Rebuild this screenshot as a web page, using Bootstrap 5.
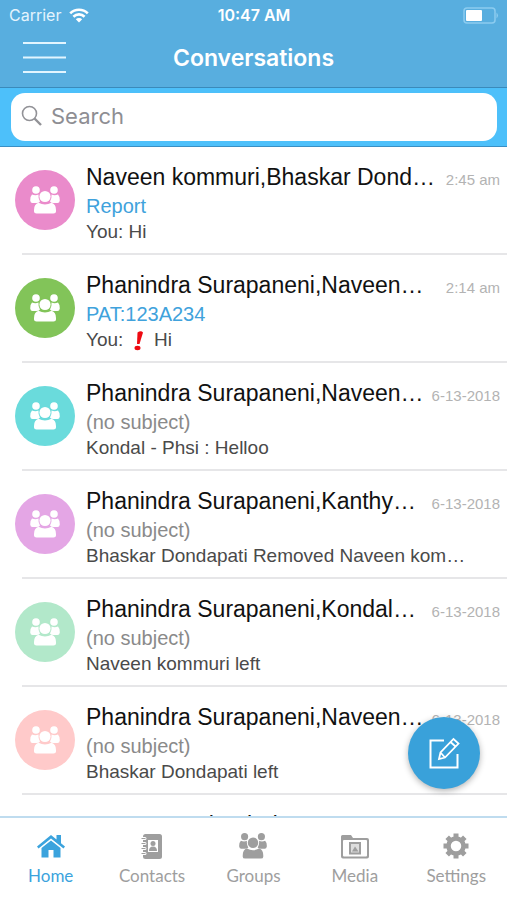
<!DOCTYPE html>
<html lang="en">
<head>
<meta charset="utf-8">
<meta name="viewport" content="width=device-width, initial-scale=1">
<title>Conversations</title>
<link href="https://cdn.jsdelivr.net/npm/bootstrap@5.3.0/dist/css/bootstrap.min.css" rel="stylesheet">
<style>
body{font-family:"Liberation Sans",Arial,sans-serif;color:#111}
.app-head{background:#58aedf;border-bottom:1px solid #3a8abb;font-family:Inter,sans-serif;color:#fff}
.status-bar{height:30px;font-size:16px;line-height:30px;padding:0 8px 0 9px}
.status-bar .carrier{color:#e4f4fd}
.status-bar .clock{font-weight:600}
.title-bar{height:57px}
.title-bar h1{font-size:23px;line-height:56px;font-weight:600}
.menu-btn{padding:11px 0 13px 22px;line-height:0}
.side{flex:1 1 0}
.search-band{background:#4dc0fa;border-bottom:1px solid #3a8fc4;padding:5px 10px 5px 11px}
.search-box{background:#fff;border-radius:14px;height:48px;padding:0 10px 2px}
.search-box input{font-family:Inter,sans-serif;font-size:22px;line-height:46px;outline:0;color:#555}
.search-box input::placeholder{color:#8e8e93;opacity:1}
.threads-pane{min-height:0}
.thread{color:inherit;padding:0 7px 0 15px;height:108px}
.thread-body{padding-top:16px}
.thread::after{content:"";position:absolute;left:22px;right:0;bottom:0;height:2px;background:#e6e6e8}
.avatar{width:60px;height:60px;margin:23px 11px 0 0}
.who{font-size:23px;line-height:28px}
.when{font-size:15px;line-height:28px;color:#b3b3b3}
.topic{font-size:20px;line-height:24px;color:#8a8a8a}
.topic.tagged{color:#40a2dc}
.snippet{font-size:19px;line-height:28px;color:#4a4a4a}
.tone-pink{background:#ea8bcb}.tone-green{background:#82c459}.tone-cyan{background:#6adbdc}
.tone-lilac{background:#e4a6e5}.tone-mint{background:#b2e8ca}.tone-rose{background:#ffcaca}
.compose{right:27px;bottom:27px;width:72px;height:72px;background:#39a1da;box-shadow:0 2px 6px rgba(0,0,0,.3)}
.tabs{border-top:2px solid #bfdcef;background:#fff;height:84px}
.tab{color:#9e9e9e;font-family:Lato,sans-serif;font-size:17px;line-height:22px;padding-top:14px}
.tab svg{margin-bottom:5px}
.tab.current{color:#3ba3dd}
</style>
<script defer src="https://cdn.jsdelivr.net/npm/bootstrap@5.3.0/dist/js/bootstrap.bundle.min.js"></script>
</head>
<body>
<svg width="0" height="0" class="position-absolute" aria-hidden="true">
<symbol id="people" viewBox="0 0 30 28">
<circle cx="6" cy="4" r="3.800"/><circle cx="24" cy="4" r="3.800"/>
<path d="M2 8.500q3.500 1.500 6.500 0q-.5 4 1.500 7q-1 1.500-3.500 1.500h-4q-2 0-2.300-2.500q-.2-4 1.800-6zM28 8.500q-3.500 1.500-6.500 0q.5 4-1.500 7q1 1.500 3.500 1.500h4q2 0 2.300-2.500q.2-4-1.800-6z"/>
<circle cx="15" cy="10.500" r="5.600"/>
<path d="M8.500 16.800q6.500 3.600 13 0q4.500 1.200 4.500 7.200v1.500q0 2-2.500 2H6.500q-2.500 0-2.500-2V24q0-6 4.500-7.200z"/>
</symbol>
</svg>
<div class="d-flex flex-column vh-100 overflow-hidden bg-white">
<header class="app-head">
<div class="status-bar d-flex align-items-center">
<div class="side d-flex align-items-center gap-2"><span class="carrier">Carrier</span>
<svg width="20" height="15" viewBox="0 0 20 15" fill="none" stroke="#fff" stroke-width="2.600"><path d="M1.200 5.300a12.500 12.500 0 0 1 17.600 0M4.400 8.700a8 8 0 0 1 11.200 0"/><path d="M10 14.500l-3.200-3.300a4.600 4.600 0 0 1 6.400 0z" fill="#fff" stroke="none"/></svg></div>
<span class="clock">10:47 AM</span>
<div class="side d-flex justify-content-end"><svg width="36" height="17" viewBox="0 0 36 17"><rect x="1" y="1" width="31" height="15" rx="3" fill="none" stroke="#8cccf0" stroke-width="1.500"/><rect x="3" y="3" width="16" height="11" rx="1" fill="#fff"/><path d="M33.500 5.500q3 3 0 6z" fill="#8cccf0"/></svg></div>
</div>
<div class="title-bar d-flex align-items-start">
<div class="side"><button class="btn border-0 menu-btn" aria-label="Menu"><svg width="45" height="33" viewBox="0 0 45 33" stroke="#e2f5ff" stroke-width="2.200"><path d="M1 2h43M1 16.500h43M1 31h43"/></svg></button></div>
<h1 class="m-0">Conversations</h1>
<div class="side"></div>
</div>
</header>
<div class="search-band">
<label class="search-box d-flex align-items-center gap-2">
<svg width="22" height="22" viewBox="0 0 22 22" fill="none" stroke="#929297"><circle cx="8.500" cy="8.500" r="7" stroke-width="1.600"/><path d="M13.500 13.500l6.500 6.500" stroke-width="2.400"/></svg>
<input type="text" class="border-0 p-0 flex-fill bg-transparent" placeholder="Search" aria-label="Search">
</label>
</div>
<main class="threads-pane flex-fill position-relative">
<div class="h-100 overflow-hidden">
<a href="#" class="thread d-flex position-relative text-decoration-none"><span class="avatar tone-pink rounded-circle d-flex align-items-center justify-content-center flex-shrink-0"><svg width="30" height="28" fill="#fff"><use href="#people"/></svg></span><div class="thread-body flex-fill overflow-hidden"><div class="d-flex justify-content-between align-items-baseline"><span class="who text-nowrap">Naveen kommuri,Bhaskar Dond…</span><span class="when text-nowrap">2:45 am</span></div><div class="topic tagged">Report</div><div class="snippet text-nowrap">You: Hi</div></div></a>
<a href="#" class="thread d-flex position-relative text-decoration-none"><span class="avatar tone-green rounded-circle d-flex align-items-center justify-content-center flex-shrink-0"><svg width="30" height="28" fill="#fff"><use href="#people"/></svg></span><div class="thread-body flex-fill overflow-hidden"><div class="d-flex justify-content-between align-items-baseline"><span class="who text-nowrap">Phanindra Surapaneni,Naveen…</span><span class="when text-nowrap">2:14 am</span></div><div class="topic tagged">PAT:123A234</div><div class="snippet text-nowrap">You: <svg class="mx-1" role="img" aria-label="Important" width="12" height="20" viewBox="0 0 12 20" fill="#ee0a12"><path d="M4.500 1.500q3.500-2.500 5.500 0L6.500 13H4z"/><ellipse cx="4.500" cy="17" rx="3" ry="2.200"/></svg> Hi</div></div></a>
<a href="#" class="thread d-flex position-relative text-decoration-none"><span class="avatar tone-cyan rounded-circle d-flex align-items-center justify-content-center flex-shrink-0"><svg width="30" height="28" fill="#fff"><use href="#people"/></svg></span><div class="thread-body flex-fill overflow-hidden"><div class="d-flex justify-content-between align-items-baseline"><span class="who text-nowrap">Phanindra Surapaneni,Naveen…</span><span class="when text-nowrap">6-13-2018</span></div><div class="topic">(no subject)</div><div class="snippet text-nowrap">Kondal - Phsi : Helloo</div></div></a>
<a href="#" class="thread d-flex position-relative text-decoration-none"><span class="avatar tone-lilac rounded-circle d-flex align-items-center justify-content-center flex-shrink-0"><svg width="30" height="28" fill="#fff"><use href="#people"/></svg></span><div class="thread-body flex-fill overflow-hidden"><div class="d-flex justify-content-between align-items-baseline"><span class="who text-nowrap">Phanindra Surapaneni,Kanthy…</span><span class="when text-nowrap">6-13-2018</span></div><div class="topic">(no subject)</div><div class="snippet text-nowrap">Bhaskar Dondapati Removed Naveen kom…</div></div></a>
<a href="#" class="thread d-flex position-relative text-decoration-none"><span class="avatar tone-mint rounded-circle d-flex align-items-center justify-content-center flex-shrink-0"><svg width="30" height="28" fill="#fff"><use href="#people"/></svg></span><div class="thread-body flex-fill overflow-hidden"><div class="d-flex justify-content-between align-items-baseline"><span class="who text-nowrap">Phanindra Surapaneni,Kondal…</span><span class="when text-nowrap">6-13-2018</span></div><div class="topic">(no subject)</div><div class="snippet text-nowrap">Naveen kommuri left</div></div></a>
<a href="#" class="thread d-flex position-relative text-decoration-none"><span class="avatar tone-rose rounded-circle d-flex align-items-center justify-content-center flex-shrink-0"><svg width="30" height="28" fill="#fff"><use href="#people"/></svg></span><div class="thread-body flex-fill overflow-hidden"><div class="d-flex justify-content-between align-items-baseline"><span class="who text-nowrap">Phanindra Surapaneni,Naveen…</span><span class="when text-nowrap">6-13-2018</span></div><div class="topic">(no subject)</div><div class="snippet text-nowrap">Bhaskar Dondapati left</div></div></a>
<a href="#" class="thread d-flex position-relative text-decoration-none"><span class="avatar tone-cyan rounded-circle flex-shrink-0"></span><div class="thread-body flex-fill overflow-hidden"><div class="who text-nowrap">Naveen S,Phanindra Surapa…</div></div></a>
</div>
<button class="compose btn border-0 rounded-circle p-0 position-absolute d-flex align-items-center justify-content-center" aria-label="New message"><svg width="32" height="32" viewBox="0 0 32 32" fill="none" stroke="#fff" stroke-width="2"><path d="M16 3.500H2.500v27h27V17"/><path d="M11 22l1.500-6.500L25.500 2l5 4.500-13.500 14zM22.500 5l5 4.500M12.500 15.500l4.500 5" stroke-width="1.800"/></svg></button>
</main>
<nav class="tabs row g-0 row-cols-5 text-center flex-shrink-0">
<a href="#" class="tab current col text-decoration-none d-flex flex-column align-items-center" aria-current="page"><svg width="28" height="28" viewBox="0 0 28 28" fill="currentColor"><path d="M14 3L0 14.500l1.500 2L14 6.500l12.500 10 1.500-2-4-3.300V3h-4.500v4.500z"/><path d="M14 8.500L4.500 16v9.500h7V18h5v7.500h7V16z"/></svg>Home</a>
<a href="#" class="tab col text-decoration-none d-flex flex-column align-items-center"><svg width="28" height="28" viewBox="0 0 28 28"><rect x="5" y="2" width="19" height="25" rx="2.500" fill="currentColor"/><rect x="10" y="8" width="10" height="12" fill="#fff"/><circle cx="15" cy="11.500" r="2.500" fill="currentColor"/><path d="M11 19q0-4.500 4-4.500t4 4.500z" fill="currentColor"/><path d="M3 6.500h4M3 11.500h4M3 16.500h4M3 21.500h4" stroke="#fff" stroke-width="3" stroke-linecap="round"/><path d="M3.500 6.500h4M3.500 11.500h4M3.500 16.500h4M3.500 21.500h4" stroke="currentColor" stroke-width="1.200"/></svg>Contacts</a>
<a href="#" class="tab col text-decoration-none d-flex flex-column align-items-center"><svg width="28" height="28" fill="currentColor"><use href="#people"/></svg>Groups</a>
<a href="#" class="tab col text-decoration-none d-flex flex-column align-items-center"><svg width="28" height="28" viewBox="0 0 28 28"><path d="M0 24.500V4.500Q0 3 1.500 3H10l2 3h14q2 0 2 2v16.500q0 2-2 2H2q-2 0-2-2z" fill="currentColor"/><rect x="2" y="8" width="24" height="16.500" rx="1" fill="#fff"/><rect x="8" y="10" width="12" height="12.500" fill="currentColor"/><path d="M10 12h8v8.500h-8z" fill="#ddd"/><path d="M11 19.500l3-5 3.500 5z" fill="currentColor"/></svg>Media</a>
<a href="#" class="tab col text-decoration-none d-flex flex-column align-items-center"><svg width="28" height="28" viewBox="-14 -14 28 28" fill="none" stroke="currentColor"><circle r="7.500" stroke-width="4.500"/><path d="M0-12.500v4M0 12.500v-4M-12.500 0h4M12.500 0h-4M-8.800-8.800l3 3M8.800-8.800l-3 3M-8.800 8.800l3-3M8.800 8.800l-3-3" stroke-width="5"/></svg>Settings</a>
</nav>
</div>
</body>
</html>
